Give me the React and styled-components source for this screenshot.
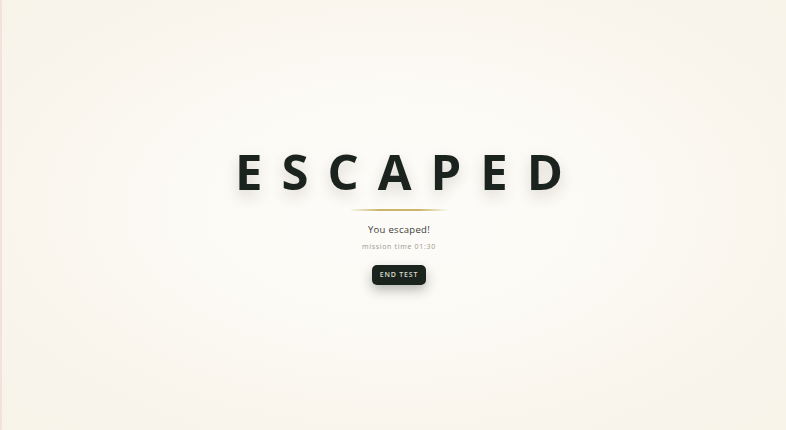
import React from "react";
import styled, { createGlobalStyle } from "styled-components";

const GlobalStyle = createGlobalStyle`
  html, body {
    margin: 0;
    padding: 0;
    height: 100%;
  }
  body {
    font-family: "Open Sans", "Noto Sans", sans-serif;
    background: #f8f4ea;
  }
`;

const App = () => {
  return (
    <Page>
      <GlobalStyle />
      <Content>
        <Title>ESCAPED</Title>
        <Divider />
        <Message>You escaped!</Message>
        <MissionTime>mission time 01:30</MissionTime>
        <EndButton>END TEST</EndButton>
      </Content>
    </Page>
  );
};

export default App;

const Page = styled.div`
  box-sizing: border-box;
  height: 100vh;
  display: flex;
  align-items: center;
  justify-content: center;
  padding-left: 10px;
  border-left: 2px solid #f3e2da;
  background: radial-gradient(
    ellipse at 50% 48%,
    #fdfcf9 0%,
    #fcfaf5 35%,
    #f9f5ec 75%,
    #f8f3e9 100%
  );
`;

const Content = styled.div`
  display: flex;
  flex-direction: column;
  align-items: center;
  margin-top: 1px;
`;

const Title = styled.h1`
  margin: 0;
  font-size: 49px;
  font-weight: 700;
  line-height: 1;
  color: #1b231e;
  letter-spacing: 19px;
  padding-left: 19px;
  text-shadow: 0 6px 14px rgba(60, 50, 30, 0.18);
`;

const Divider = styled.div`
  width: 100px;
  height: 2px;
  margin-top: 13px;
  background: linear-gradient(
    90deg,
    rgba(200, 180, 110, 0) 0%,
    #cbb66c 30%,
    #cbb66c 70%,
    rgba(200, 180, 110, 0) 100%
  );
`;

const Message = styled.div`
  margin-top: 12px;
  font-size: 9.5px;
  color: #3a3d39;
  letter-spacing: 0.3px;
`;

const MissionTime = styled.div`
  margin-top: 6px;
  font-size: 7px;
  color: #9a9890;
  letter-spacing: 0.7px;
`;

const EndButton = styled.button`
  margin-top: 14px;
  width: 54px;
  height: 20px;
  padding: 0;
  border: none;
  border-radius: 5px;
  background: #1b231e;
  color: #d9dccd;
  font-family: "Open Sans", "Noto Sans", sans-serif;
  font-size: 7px;
  font-weight: 600;
  letter-spacing: 0.8px;
  box-shadow: 0 5px 12px rgba(20, 30, 25, 0.3);
  cursor: pointer;
`;
